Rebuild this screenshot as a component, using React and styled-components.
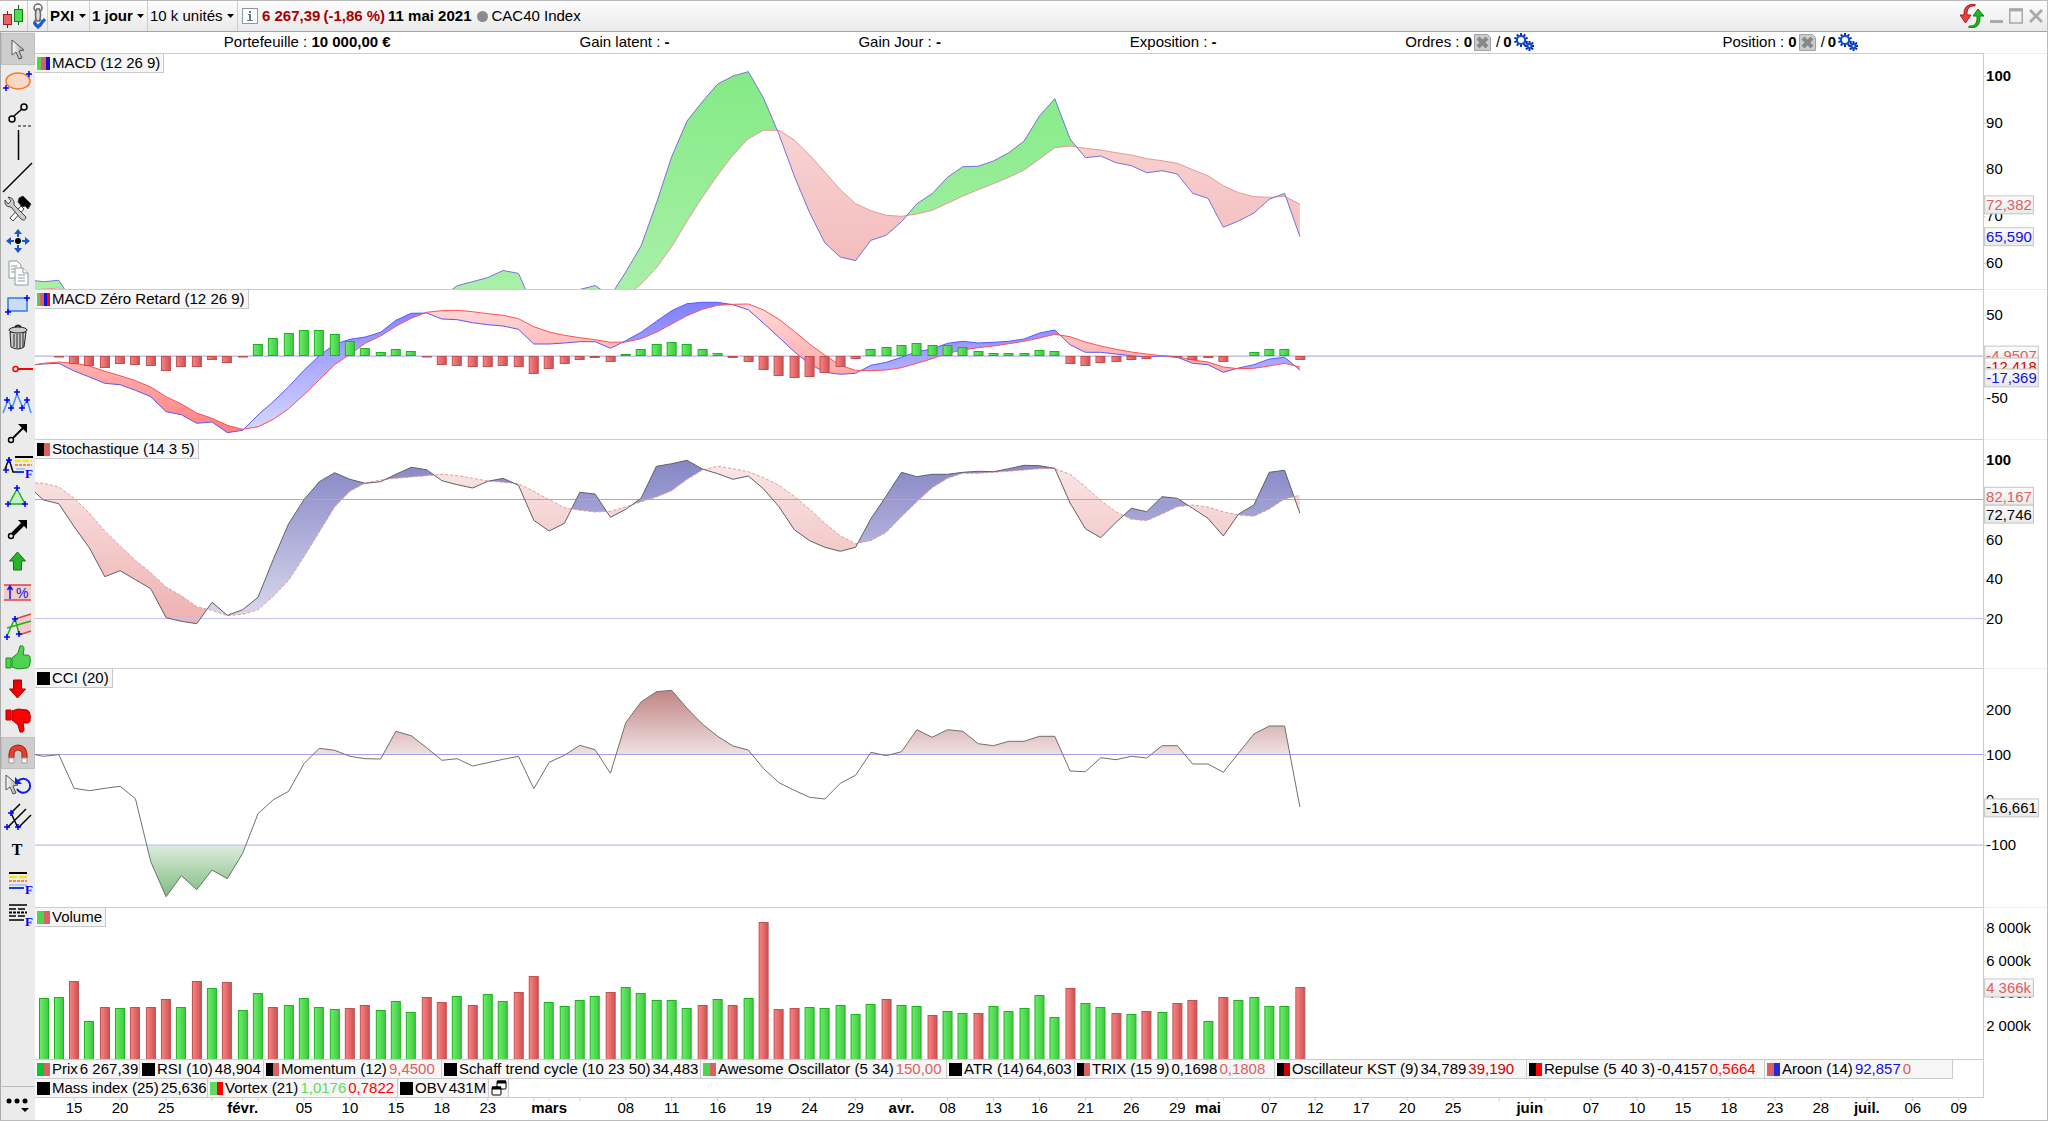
import React from "react"
import styled, { createGlobalStyle } from "styled-components"

// horizontal layout of the plots, in viewBox units
const PLOT_WIDTH = 1949
const STEP = 15.33
const xAt = i => 8.5 + STEP * i

const MACD = [
  280.7, 281.7, 280.3, 304, 312, 312, 312, 312, 312, 312, 312, 312, 312, 312,
  312, 312, 312, 312, 312, 312, 312, 312, 312, 312, 312, 312, 310, 297, 285.7,
  281.7, 277.5, 270.5, 273.4, 308, 312, 304, 289.5, 285.5, 296, 272, 246, 203.3,
  156.7, 121, 101.7, 84, 76, 71.7, 98.3, 134.3, 176, 212.7, 243, 257, 260.7,
  240.3, 235.3, 221.7, 203.7, 193.7, 177.3, 166.7, 166.3, 161, 152.7, 141, 116,
  98.7, 139, 157.7, 156, 162.7, 165.7, 172.7, 170.7, 174, 193.3, 198.3, 227.3,
  221, 213, 199.3, 193.3, 236.7,
]

const MACD_SIGNAL = [
  290, 289, 288, 296, 306, 306, 306, 306, 306, 306, 306, 306, 306, 306, 306,
  306, 306, 306, 306, 306, 306, 306, 306, 306, 306, 306, 306, 304, 304, 302,
  300, 298, 298, 298, 298, 298, 298, 298, 298, 296, 284, 267.7, 246.7, 221,
  197.3, 175, 155, 138.7, 130.3, 130.3, 140, 155, 172.3, 189.7, 203.7, 210.7,
  215.3, 216.3, 214, 210.3, 203.3, 196, 189.7, 183.7, 177.3, 170, 159, 147.7,
  146, 148.3, 150, 152.7, 155, 158.7, 160.7, 163.3, 169.7, 175.7, 185.7, 192.7,
  196.7, 197.3, 196.3, 204.3,
]

const ZERO_LAG = [
  364.7, 364, 363.3, 371, 377, 383.3, 384.7, 390.3, 396.7, 411.7, 414.7, 423.3,
  422, 432.7, 430.3, 415, 401.7, 386.7, 370.3, 355.7, 344.3, 339.3, 337, 332.3,
  320.3, 313.3, 313, 319, 319.7, 322.7, 324.7, 326, 329.3, 344, 344, 343, 341.7,
  341.7, 348.3, 340.7, 332.3, 321.3, 310.7, 303.7, 302.3, 302.3, 304.7, 309.7,
  323.3, 337.3, 351.7, 364, 372.3, 374.3, 373.3, 365.3, 362.3, 357.3, 351.7,
  349, 343.3, 341.3, 343, 342.3, 341.3, 339, 333, 330, 344.7, 352.3, 352.3, 354,
  355.7, 357, 356, 357.3, 363.3, 364.7, 372.3, 368, 364.7, 359, 357.3, 370,
]

const ZERO_LAG_SIGNAL = [
  364.7, 363.3, 362, 363.3, 366, 371.3, 375.7, 380.7, 387, 396.7, 404, 413,
  418.3, 425.3, 429.3, 426.7, 419.3, 408.7, 394.7, 379.7, 364.7, 354.3, 343.3,
  336, 326.3, 318.3, 312.3, 310.7, 310.3, 311.7, 313.7, 315.3, 318.7, 326.7,
  332, 335.3, 337.7, 339.7, 342.3, 342, 338.7, 332.3, 324, 315.7, 309.3, 305.3,
  304.3, 304, 310, 319.3, 331.3, 344, 355.3, 365.3, 370.3, 370.7, 370, 367.7,
  363.3, 358.7, 353.3, 350, 347.7, 346, 343.7, 341.3, 338, 334.3, 336.7, 342,
  346, 349.3, 352, 354, 355.7, 356.7, 360, 362, 367, 368.7, 368.3, 366, 363.3,
  367,
]

const HISTOGRAM = [
  0, -1, -8, -10, -12, -8, -9, -10, -15, -11, -11, -4, -7, -1, 12, 18, 23, 26,
  26, 22, 15, 8, 4, 7, 5, -1, -9, -10, -11, -11, -10, -11, -18, -13, -8, -4, -2,
  -6, 2, 7, 12, 14, 12, 7, 3, -2, -6, -14, -20, -22, -21, -17, -11, -3, 7, 9,
  11, 13, 11, 11, 9, 5, 3, 3, 3, 6, 5, -8, -10, -7, -6, -4, -3, 0, -1, -4, -2,
  -6, 0, 4, 7, 7, -4,
]

const STOCH = [
  492.3, 500, 503.7, 526.7, 548, 576.7, 570.7, 579.7, 588.7, 617.7, 621.3,
  623.7, 602.3, 615.3, 609.7, 597.3, 559.3, 523.7, 499.7, 481.7, 472.7, 479.3,
  483.3, 481.7, 474.3, 467.3, 469.7, 480.7, 484.7, 488, 481.3, 478.3, 485.3,
  520.3, 531, 523.3, 492.3, 494, 517.3, 509.3, 498.3, 466.3, 463.7, 460.3, 469,
  473.7, 479.3, 476, 489, 506.7, 529.7, 540.7, 547.3, 551.3, 547.3, 518.7, 496,
  472.3, 476.7, 474.3, 474.3, 472.3, 471.3, 471.7, 468.7, 465.3, 465.7, 468.3,
  503, 528.7, 537.7, 522.3, 508.3, 511.7, 496.7, 498.3, 508.3, 518.3, 536, 514,
  505, 472.3, 470.3, 513.3,
]

const STOCH_SIGNAL = [
  483, 483.3, 487, 498.3, 513.3, 531, 546, 560.3, 572.7, 587, 595.7, 606.7,
  610.3, 615.7, 614.3, 609.7, 596.3, 580.3, 556.7, 532, 507, 491.3, 483, 480,
  478.3, 477, 475.7, 474.3, 475.7, 478.3, 481, 482.3, 483.7, 491.3, 499.7,
  507.7, 510.3, 512, 511.3, 507, 501.7, 497, 490.7, 479.3, 470, 466.3, 468.7,
  471.7, 477.7, 485.3, 496.3, 509.3, 523.3, 535.7, 543.7, 540.7, 532.3, 516.7,
  501.7, 487.7, 478.3, 473.3, 473.3, 472.3, 471.3, 470, 468.7, 468.7, 474.3,
  486.7, 500.7, 511.7, 519.3, 520.7, 514, 506.7, 505, 507, 511.7, 515, 516.3,
  509, 499, 495.3,
]

const CCI = [
  754.7, 756.3, 754.6, 788.3, 790.7, 788.3, 786.3, 798.7, 861.7, 896.7, 875.7,
  889.7, 870, 878.7, 853.3, 813.7, 799.7, 791.3, 763.7, 748.3, 750.3, 756.3,
  758.7, 759, 731.3, 735.7, 747.7, 760.3, 758.7, 766, 762.7, 759.3, 756.3,
  788.7, 762.3, 755.3, 745.3, 749.7, 773.3, 722.7, 702, 691.7, 690.3, 708.3,
  724, 736.3, 746, 750, 768.7, 782.7, 790.3, 797.3, 799, 783.3, 775.3, 752.3,
  755.7, 751.7, 729.7, 737.3, 729.7, 731.3, 743.7, 745.7, 741.3, 741.3, 736.3,
  736.3, 771, 771.7, 757.7, 759.7, 756.3, 758, 745.7, 745.7, 764, 764, 772.3,
  753, 734, 726, 726, 807,
]

const VOLUME = [
  61, 62, 78, 38, 52, 51, 52, 52, 60, 52, 78, 71, 77, 49, 66, 52, 54, 61, 52,
  50, 51, 54, 49, 58, 47, 62, 57, 63, 54, 65, 58, 67, 83, 57, 53, 59, 63, 67,
  72, 66, 59, 59, 51, 54, 60, 54, 61, 137, 50, 51, 52, 51, 54, 45, 55, 60, 54,
  53, 44, 48, 46, 46, 53, 48, 51, 64, 42, 71, 56, 52, 46, 45, 48, 47, 56, 59,
  38, 62, 59, 62, 53, 53, 72,
]

// g: close above the previous one, r: below
const VOLUME_SIDES =
  "ggrgrgrrrg" +
  "rgrggrgggg" +
  "rrgggrrgrg" +
  "grrggggrgg" +
  "gggrgrgrrr" +
  "gggggrggrg" +
  "grgggggrgg" +
  "rgrgrrgrgg" +
  "ggr"

const DATES = [
  [2, "15"], [5, "20"], [8, "25"], [13, "févr.", true], [17, "05"], [20, "10"],
  [23, "15"], [26, "18"], [29, "23"], [33, "mars", true], [38, "08"],
  [41, "11"], [44, "16"], [47, "19"], [50, "24"], [53, "29"],
  [56, "avr.", true], [59, "08"], [62, "13"], [65, "16"], [68, "21"],
  [71, "26"], [74, "29"], [76, "mai", true], [80, "07"], [83, "12"],
  [86, "17"], [89, "20"], [92, "25"], [97, "juin", true], [101, "07"],
  [104, "10"], [107, "15"], [110, "18"], [113, "23"], [116, "28"],
  [119, "juil.", true], [122, "06"], [125, "09"],
]
const MINOR_TICKS = [11, 14, 32, 35, 77, 95, 98]

const GREEN = "#4fd24f"
const RED = "#dd6060"
const BLUE = "#1010e0"

const INDICATORS = [
  { name: "Prix", colors: ["#00c830", RED], values: [["6 267,39", "#000"]], w: 105 },
  { name: "RSI (10)", colors: ["#000"], values: [["48,904", "#000"]], w: 124 },
  { name: "Momentum (12)", colors: ["#000", RED], values: [["9,4500", RED]], w: 178 },
  { name: "Schaff trend cycle (10 23 50)", colors: ["#000"], values: [["34,483", "#000"]], w: 259 },
  { name: "Awesome Oscillator (5 34)", colors: [GREEN, RED], values: [["150,00", RED]], w: 246 },
  { name: "ATR (14)", colors: ["#000"], values: [["64,603", "#000"]], w: 128 },
  { name: "TRIX (15 9)", colors: ["#000", RED], values: [["0,1698", "#000"], ["0,1808", RED]], w: 200 },
  { name: "Oscillateur KST (9)", colors: ["#000", "#c80000"], values: [["34,789", "#000"], ["39,190", "#c80000"]], w: 252 },
  { name: "Repulse (5 40 3)", colors: ["#000", "#f00"], values: [["-0,4157", "#000"], ["0,5664", "#f00"]], w: 238 },
  { name: "Aroon (14)", colors: [RED, "#2828dc"], values: [["92,857", BLUE], ["0", RED]], w: 188 },
]

const MORE_INDICATORS = [
  { name: "Mass index (25)", colors: ["#000"], values: [["25,636", "#000"]], w: 173 },
  { name: "Vortex (21)", colors: ["#5fdc5f", "#f00"], values: [["1,0176", "#5fdc5f"], ["0,7822", "#f00"]], w: 190 },
  { name: "OBV", colors: ["#000"], values: [["431M", "#000"]], w: 91 },
]

const xs = MACD.map((_, i) => (i === 0 ? 0 : xAt(i - 1)))

const linePath = ys => "M" + ys.map((y, i) => `${xs[i]},${y}`).join("L")

// closed areas between two series, split wherever they cross
const bands = (a, b) => {
  const out = { above: "", below: "" }
  let top = []
  let bottom = []
  let side = null
  const flush = () => {
    if (side) out[side] += "M" + [...top, ...bottom.reverse()].join("L") + "Z"
  }
  a.forEach((ya, i) => {
    const yb = b[i]
    const next = ya <= yb ? "above" : "below"
    if (side && next !== side) {
      const d0 = a[i - 1] - b[i - 1]
      const t = d0 / (d0 - (ya - yb))
      const cross = `${xs[i - 1] + t * (xs[i] - xs[i - 1])},${a[i - 1] + t * (ya - a[i - 1])}`
      top.push(cross)
      flush()
      top = [cross]
      bottom = []
    }
    side = next
    top.push(`${xs[i]},${ya}`)
    bottom.push(`${xs[i]},${yb}`)
  })
  flush()
  return out
}

const Fade = ({ id, from, to, y1, y2 }) => (
  <linearGradient id={id} gradientUnits="userSpaceOnUse" x1="0" x2="0" y1={y1} y2={y2}>
    <stop offset="0" stopColor={from} />
    <stop offset="1" stopColor={to} />
  </linearGradient>
)

const BarFills = () => (
  <defs>
    <linearGradient id="barGreen">
      <stop offset="0" stopColor="#6aee6a" />
      <stop offset="1" stopColor="#40c840" />
    </linearGradient>
    <linearGradient id="barRed">
      <stop offset="0" stopColor="#fa8484" />
      <stop offset="1" stopColor="#cc5252" />
    </linearGradient>
  </defs>
)

const Bar = ({ i, y, height, green }) => (
  <rect
    x={Math.round(xAt(i)) - 4.5}
    y={Math.round(y) + 0.5}
    width="9"
    height={Math.max(height - 1, 0.5)}
    fill={green ? "url(#barGreen)" : "url(#barRed)"}
    stroke={green ? "#1cb41c" : "#c45050"}
  />
)

const Level = ({ y, color = "#a3a3e6" }) => (
  <rect x="0" y={y} width={PLOT_WIDTH} height="1" fill={color} />
)

const MacdPlot = () => {
  const area = bands(MACD, MACD_SIGNAL)
  return (
    <>
      <defs>
        <Fade id="macdUp" from="#84ea84" to="#a8f0a8" y1={70} y2={289} />
        <Fade id="macdDown" from="#f8d6d6" to="#f3b8b8" y1={110} y2={289} />
      </defs>
      <path d={area.above} fill="url(#macdUp)" />
      <path d={area.below} fill="url(#macdDown)" />
      <Line d={linePath(MACD_SIGNAL)} stroke="#e89898" />
      <Line d={linePath(MACD)} stroke="#7474d8" />
    </>
  )
}

const ZeroLagPlot = () => {
  const area = bands(ZERO_LAG, ZERO_LAG_SIGNAL)
  return (
    <>
      <defs>
        <Fade id="zeroUp" from="#8080ff" to="#d8d8ff" y1={302} y2={432} />
        <Fade id="zeroDown" from="#ffdcdc" to="#ff8080" y1={302} y2={432} />
      </defs>
      <BarFills />
      <Level y={355} color="#d8d8f6" />
      <Level y={356} color="#c8c8f0" />
      <path d={area.above} fill="url(#zeroUp)" />
      <path d={area.below} fill="url(#zeroDown)" />
      <Line d={linePath(ZERO_LAG)} stroke="#5858ff" />
      <Line d={linePath(ZERO_LAG_SIGNAL)} stroke="#ff5050" />
      {HISTOGRAM.map((v, i) =>
        v === 0 ? null : (
          <Bar key={i} i={i} y={v > 0 ? 356 - v : 356} height={Math.abs(v)} green={v > 0} />
        )
      )}
    </>
  )
}

const StochPlot = () => {
  const area = bands(STOCH, STOCH_SIGNAL)
  return (
    <>
      <defs>
        <Fade id="stochUp" from="#8686c6" to="#dcdcf0" y1={460} y2={624} />
        <Fade id="stochDown" from="#fae6e6" to="#eeb0b0" y1={465} y2={624} />
      </defs>
      <path d={area.above} fill="url(#stochUp)" />
      <path d={area.below} fill="url(#stochDown)" />
      <Level y={499} />
      <Level y={618} color="#c4c4ee" />
      <Line d={linePath(STOCH_SIGNAL)} stroke="#e49a9a" strokeDasharray="3 2" />
      <Line d={linePath(STOCH)} stroke="#606068" />
    </>
  )
}

const CciPlot = () => {
  const high = bands(CCI, CCI.map(() => 754.5))
  const low = bands(CCI, CCI.map(() => 845))
  return (
    <>
      <defs>
        <Fade id="cciHigh" from="#c08484" to="#f0e0e0" y1={690} y2={754} />
        <Fade id="cciLow" from="#dcecdc" to="#80bc80" y1={845} y2={897} />
      </defs>
      <path d={high.above} fill="url(#cciHigh)" />
      <path d={low.below} fill="url(#cciLow)" />
      <Level y={754} />
      <Level y={844} color="#dcdcf6" />
      <Level y={845} color="#d0d0f2" />
      <Line d={linePath(CCI)} stroke="#707070" />
    </>
  )
}

const VolumePlot = () => (
  <>
    <BarFills />
    {VOLUME.map((v, i) => (
      <Bar key={i} i={i} y={1059 - v} height={v + 2} green={VOLUME_SIDES[i] === "g"} />
    ))}
  </>
)

const PANELS = [
  {
    name: "MACD (12 26 9)",
    colors: [GREEN, RED, BLUE],
    top: 53,
    height: 236,
    Plot: MacdPlot,
    labels: [[75, "100", true], [122, "90"], [169, "80"], [216, "70"], [263, "60"]],
    tags: [[205, "72,382", RED], [237, "65,590", BLUE]],
  },
  {
    name: "MACD Zéro Retard (12 26 9)",
    colors: [GREEN, RED, BLUE, "#f00"],
    top: 289,
    height: 150,
    Plot: ZeroLagPlot,
    labels: [[314, "50"], [398, "-50"]],
    tags: [[355, "-4,9507", RED], [367, "-12,418", "#e00000"], [378, "-17,369", BLUE]],
  },
  {
    name: "Stochastique (14 3 5)",
    colors: ["#000", RED],
    top: 439,
    height: 229,
    Plot: StochPlot,
    labels: [[459, "100", true], [539, "60"], [579, "40"], [619, "20"]],
    tags: [[496, "82,167", RED], [514, "72,746", "#000"]],
  },
  {
    name: "CCI (20)",
    colors: ["#000"],
    top: 668,
    height: 239,
    Plot: CciPlot,
    labels: [[709, "200"], [754, "100"], [800, "0"], [845, "-100"]],
    tags: [[808, "-16,661", "#000"]],
  },
  {
    name: "Volume",
    colors: [GREEN, RED],
    top: 907,
    height: 152,
    Plot: VolumePlot,
    labels: [[927, "8 000k"], [960, "6 000k"], [993, "4 000k"], [1026, "2 000k"]],
    tags: [[988, "4 366k", RED]],
  },
]

const Cross = ({ x, y }) => (
  <path d={`M${x - 3} ${y}h6M${x} ${y - 3}v6`} stroke="#00f" strokeWidth="1.5" />
)

const Letter = () => (
  <text x="23" y="29" fontFamily="Liberation Serif, serif" fontSize="13" fontWeight="700" fill="#00f">
    F
  </text>
)

const Pointer = () => (
  <path d="M4 3v15l4-3 3 7 3-1-3-7 5-1z" fill="url(#pointerFill)" stroke="#555" />
)

const Arrow = ({ thick }) => (
  <>
    <circle cx="9" cy="23" r="2.5" stroke="#000" strokeWidth="1.5" fill="none" />
    <path d="M11 21L22 10" stroke="#000" strokeWidth={thick ? 4 : 2} />
    <path d="M16 7h9v9z" fill="#000" />
  </>
)

const ThumbShape = () => (
  <>
    <path d="M4 17h5v10H4z" />
    <path d="M10 17l6-5 2-7q4-1 4 3l-1 6h5q3 1 2 4 1 2 0 4 0 4-3 5l-9 1-6-2z" />
  </>
)

const TOOLS = [
  ["Sélection", (
    <>
      <defs>
        <linearGradient id="pointerFill">
          <stop offset="0" stopColor="#fff" />
          <stop offset="1" stopColor="#999" />
        </linearGradient>
      </defs>
      <g transform="translate(6 4)"><Pointer /></g>
    </>
  )],
  ["Ellipse", (
    <>
      <ellipse cx="16" cy="16" rx="12" ry="8" fill="#fad8c8" stroke="#f97a22" strokeWidth="1.5" />
      <Cross x={27} y={9} />
      <Cross x={4} y={23} />
    </>
  )],
  ["Segment", (
    <g stroke="#000" fill="none" strokeWidth="1.5">
      <circle cx="22" cy="10" r="3" />
      <circle cx="10" cy="22" r="3" />
      <path d="M12 19l8-7" />
      <path d="M16 29h15" strokeDasharray="3 2" stroke="#555" />
    </g>
  )],
  ["Ligne verticale", <path d="M16.5 1v30" stroke="#000" strokeWidth="1.5" />],
  ["Droite", <path d="M1 31L30 2" stroke="#000" strokeWidth="1.5" />],
  ["Outils", (
    <g stroke="#444">
      <path d="M19 13l-11 12 3 3 11-12z" fill="#fff" />
      <path d="M17 5l4-2 8 8-3 5-3-3-3 1-4-5z" fill="#000" />
      <path d="M3 7q-1 7 6 7l10 12q4 3 5-2L12 12q1-7-6-8l3 4-3 3z" fill="#ccc" />
    </g>
  )],
  ["Déplacer", (
    <>
      <circle cx="16" cy="16" r="3" fill="#000" />
      <path
        d="M16 4l4 5h-3v3h-2V9h-3zM16 28l4-5h-3v-3h-2v3h-3zM4 16l5-4v3h3v2H9v3zM28 16l-5-4v3h-3v2h3v3z"
        fill="#1459d0"
      />
    </>
  )],
  ["Dupliquer", (
    <g stroke="#8c9aa2" fill="#fff">
      <path d="M7 4h8l4 4v13H7z" />
      <path d="M9 9h6M9 12h6M9 15h6" />
      <path d="M13 11h8l5 5v12H13z" />
      <path d="M21 11v5h5M16 18h7M16 21h7M16 24h7" />
    </g>
  )],
  ["Rectangle", (
    <>
      <rect x="6" y="9" width="19" height="13" fill="#ccdcf8" stroke="#2a7cec" strokeWidth="1.5" />
      <Cross x={25} y={9} />
      <Cross x={6} y={23} />
    </>
  )],
  ["Supprimer", (
    <g stroke="#222" fill="#ccc">
      <path d="M8 11l1 15q7 4 13 0l2-15z" />
      <path d="M12 13v13M15 13v14M18 13v14M21 12v14" />
      <ellipse cx="16" cy="9" rx="9" ry="3" />
      <path d="M13 6q3-3 6 0" fill="none" strokeWidth="2" />
    </g>
  )],
  ["Demi-droite", (
    <>
      <path d="M16 16h15" stroke="red" strokeWidth="2" />
      <circle cx="13.5" cy="16" r="2.5" stroke="red" strokeWidth="1.5" fill="none" />
    </>
  )],
  ["Vagues", (
    <>
      <path d="M1 28l5-13 4 8 5-14 6 14 4-8 4 13" fill="none" stroke="#4090ff" strokeWidth="1.5" />
      <Cross x={15} y={7} />
      <Cross x={5} y={15} />
      <Cross x={25} y={15} />
      <Cross x={9} y={23} />
      <Cross x={20} y={23} />
    </>
  )],
  ["Flèche", <Arrow />],
  ["Retracements", (
    <>
      <path d="M13 8h18" stroke="#000" strokeWidth="2" />
      <path d="M13 12h17" stroke="#ffe600" strokeWidth="2" strokeDasharray="6 2" />
      <path d="M13 16h17" stroke="#f78c30" strokeWidth="2" strokeDasharray="3 1" />
      <path d="M3 20l4-10 4 13h2" stroke="#000" fill="none" strokeWidth="1.5" />
      <path d="M14 20h9" stroke="#b8c8f4" strokeWidth="2" />
      <path d="M13 23h9" stroke="#1040e0" strokeWidth="2" />
      <Cross x={7} y={11} />
      <Cross x={4} y={21} />
      <Letter />
    </>
  )],
  ["Triangle", (
    <>
      <path d="M15 8l8 15H7z" fill="#c8ecc8" stroke="#18b418" strokeWidth="1.5" />
      <Cross x={15} y={7} />
      <Cross x={6} y={23} />
      <Cross x={23} y={23} />
    </>
  )],
  ["Flèche épaisse", <Arrow thick />],
  ["Flèche haut", <path d="M15.5 7l8 9h-4v9h-8v-9h-4z" fill="#28b428" stroke="#177017" />],
  ["Variation", (
    <>
      <path d="M2 8h27v15H2z" fill="#f0cccc" />
      <path d="M2 8h27M2 23h27" stroke="#d44" strokeWidth="1.5" />
      <path d="M8 22V10M5.5 13L8 9l2.5 4" stroke="#1414e0" strokeWidth="1.5" fill="none" />
      <text x="14" y="21" fontFamily="Liberation Sans, sans-serif" fontSize="14" fill="#1414e0">%</text>
    </>
  )],
  ["Canal", (
    <>
      <path d="M13 10l16-5v17l-12 4z" fill="#f0cccc" />
      <path d="M13 10l16-5M17 26l12-4" stroke="#d44" strokeWidth="1.5" />
      <path d="M5 27l8-18 4 16M5 19l24-7" fill="none" stroke="#18b418" strokeWidth="1.5" />
      <Cross x={13} y={10} />
      <Cross x={5} y={28} />
      <Cross x={17} y={25} />
    </>
  )],
  ["Pouce haut", <g fill="#4fd24f" stroke="#1f8c1f"><ThumbShape /></g>],
  ["Flèche bas", <path d="M15.5 25l8-9h-4V7h-8v9h-4z" fill="#f00000" stroke="#a00000" />],
  ["Pouce bas", (
    <g fill="#f00" stroke="#b00000" transform="matrix(1 0 0 -1 0 32)"><ThumbShape /></g>
  )],
  ["Aimant", (
    <>
      <path d="M9.5 21v-4a6.5 6.5 0 0 1 13 0v4" fill="none" stroke="#a02010" strokeWidth="6" />
      <path d="M9.5 21v-4a6.5 6.5 0 0 1 13 0v4" fill="none" stroke="#e4402c" strokeWidth="4" />
      <path d="M7 21h5v5H7zM20 21h5v5h-5z" fill="#fff" stroke="#999" />
    </>
  ), true],
  ["Annuler", (
    <>
      <g transform="translate(0 3)"><Pointer /></g>
      <path d="M16 12a7 7 0 1 1-1 8" fill="none" stroke="#0a1ee6" strokeWidth="2" />
      <path d="M13 8v7h7z" fill="#0a1ee6" />
    </>
  )],
  ["Fourchette", (
    <>
      <path d="M9 12L18 3M5 27L24 8M16 27l13-13M9 12l7 15" stroke="#000" strokeWidth="1.5" />
      <Cross x={9} y={12} />
      <Cross x={5} y={26} />
      <Cross x={16} y={26} />
    </>
  )],
  ["Texte", (
    <text x="15" y="22" textAnchor="middle" fontFamily="Liberation Serif, serif" fontSize="16" fontWeight="700">
      T
    </text>
  )],
  ["Fibonacci", (
    <>
      <path d="M7 8h18" stroke="#000" strokeWidth="2" />
      <path d="M7 12h18" stroke="#ffe100" strokeWidth="2" strokeDasharray="8 2" />
      <path d="M7 16h18" stroke="#f78c30" strokeWidth="2" strokeDasharray="3 1" />
      <path d="M7 20h18" stroke="#b8c8f4" strokeWidth="2" />
      <path d="M7 23h15" stroke="#1040e0" strokeWidth="2" />
      <Letter />
    </>
  )],
  ["Projection", (
    <>
      <path d="M7 8h18M7 23h15" stroke="#000" strokeWidth="1.5" />
      <path d="M7 12h18M7 19h18" stroke="#000" strokeWidth="1.5" strokeDasharray="7 2" />
      <path d="M7 15.5h18" stroke="#000" strokeWidth="2" strokeDasharray="3 1" />
      <Letter />
    </>
  )],
]

const Caret = () => (
  <svg width="7" height="4" viewBox="0 0 7 4" aria-hidden="true">
    <path d="M0 0h7L3.5 4z" />
  </svg>
)

const Picker = ({ label, bold, value }) => (
  <PickerBox>
    <Select aria-label={label} $bold={bold} defaultValue={value}>
      <option>{value}</option>
    </Select>
    <Caret />
  </PickerBox>
)

const Gear = ({ x, y, r, teeth }) => (
  <g transform={`translate(${x} ${y})`}>
    {Array.from({ length: teeth }, (_, i) => (
      <rect key={i} x="-1" y={-r - 2} width="2" height="3" fill="#0a2cb0" transform={`rotate(${(360 / teeth) * i})`} />
    ))}
    <circle r={r - 1} fill="none" stroke="#0f50c8" strokeWidth="2" />
  </g>
)

const OrderCount = ({ label }) => (
  <Info>
    {label} : <b>0</b>
    <CountButton aria-label={`${label} : tout annuler`}>
      <svg width="17" height="17" viewBox="0 0 17 17">
        <path d="M.5.5h13l3 3v13H.5z" fill="#ccc" stroke="#a0a0a0" />
        <path d="M4 4l9 9M13 4l-9 9" stroke="#888" strokeWidth="4" />
      </svg>
    </CountButton>
    <Slash>/</Slash>
    <b>0</b>
    <CountButton aria-label={`${label} : réglages`}>
      <svg width="20" height="18" viewBox="0 0 20 18">
        <Gear x={7} y={7} r={5} teeth={10} />
        <Gear x={15.5} y={13} r={3} teeth={8} />
      </svg>
    </CountButton>
  </Info>
)

const Legend = ({ name, colors, values = [] }) => (
  <>
    <Swatch>
      {colors.map(c => (
        <Stripe key={c} $color={c} />
      ))}
    </Swatch>
    <span>{name}</span>
    {values.map(([text, color]) => (
      <Value key={text} $color={color}>
        {text}
      </Value>
    ))}
  </>
)

const Scale = ({ top, height, labels, tags }) => (
  <ScaleSvg viewBox={`0 ${top} 64 ${height}`} $height={height}>
    <defs>
      <linearGradient id="tagFill" x2="0" y2="1">
        <stop offset="0" stopColor="#fdfdfd" />
        <stop offset="1" stopColor="#e8e8e8" />
      </linearGradient>
    </defs>
    {labels.map(([y, text, bold]) => (
      <g key={text}>
        <path d={`M0 ${y + 0.5}h3`} stroke="#ccc" />
        <text x="3" y={y + 5} fontWeight={bold ? 700 : 400}>
          {text}
        </text>
      </g>
    ))}
    {tags.map(([y, text, color]) => (
      <g key={text}>
        <rect
          x="1.5"
          y={y - 9.5}
          width={text[0] === "-" ? 54 : 49}
          height="18"
          fill="url(#tagFill)"
          stroke="#c4c4c4"
        />
        <text x="3" y={y + 5} fill={color}>
          {text}
        </text>
      </g>
    ))}
  </ScaleSvg>
)

const Panel = ({ name, colors, top, height, labels, tags, Plot }) => (
  <PanelRow>
    <PlotArea>
      <PlotSvg
        viewBox={`0 ${top} ${PLOT_WIDTH} ${height}`}
        preserveAspectRatio="none"
        $height={height}
      >
        <Plot />
      </PlotSvg>
      <PanelLabel>
        <Legend name={name} colors={colors} />
      </PanelLabel>
    </PlotArea>
    <Scale top={top} height={height} labels={labels} tags={tags} />
  </PanelRow>
)

const percent = i => `${(xAt(i) / PLOT_WIDTH) * 100}%`

const App = () => {
  return (
    <>
      <GlobalStyle />
      <Window>
        <Header>
          <Segment>
            <svg width="24" height="24" viewBox="0 0 24 24">
              <path d="M5.5 7v17" stroke="#802020" />
              <rect x="1.5" y="10.5" width="8" height="10" fill="#e46464" stroke="#a02020" />
              <path d="M16.5 1v20" stroke="#086008" />
              <rect x="12.5" y="5.5" width="8" height="12" fill="#50dc50" stroke="#108010" />
            </svg>
          </Segment>
          <Segment>
            <svg width="16" height="26" viewBox="0 0 16 26">
              <g fill="none" stroke="#666" strokeWidth="1.5">
                <circle cx="8" cy="5" r="4" />
                <circle cx="8" cy="20" r="4" />
                <path d="M6.5 6q-2 6 0 12h3q2-6 0-12z" fill="#ddd" />
              </g>
              <path d="M4 19l4 5 7-8" fill="none" stroke="#1060e0" strokeWidth="3" />
            </svg>
          </Segment>
          <Picker label="Valeur" bold value="PXI" />
          <Picker label="Unité de temps" bold value="1 jour" />
          <Picker label="Historique" value="10 k unités" />
          <Quote>
            <svg width="16" height="16" viewBox="0 0 16 16">
              <rect x=".5" y=".5" width="15" height="15" fill="#fff" stroke="#8c9aa2" />
              <path d="M7 3h2v2H7zM6 6h3v6h2v1H5v-1h2V7H6z" fill="#6c7a82" />
            </svg>
            <Price>6 267,39</Price>
            <Price>(-1,86 %)</Price>
            <b>11 mai 2021</b>
            <Dot />
            <span>CAC40 Index</span>
          </Quote>
          <WindowButtons>
            <IconButton aria-label="Actualiser">
              <svg width="24" height="24" viewBox="0 0 24 24">
                <path d="M15 2Q8 1 7 8v3h4l-5.5 8L0 11h4Q3 0 15 0z" fill="#ec4040" stroke="#b01818" />
                <path d="M9 22q7 1 8-6v-4h-4l5-7 6 7h-4q1 13-11 12z" fill="#20b820" stroke="#0c800c" />
              </svg>
            </IconButton>
            <IconButton aria-label="Réduire">
              <svg width="13" height="16"><path d="M0 13.5h13" stroke="#aaa" strokeWidth="3" /></svg>
            </IconButton>
            <IconButton aria-label="Agrandir">
              <svg width="14" height="16">
                <rect x=".75" y="1" width="12.5" height="14" fill="none" stroke="#aaa" strokeWidth="1.5" />
                <path d="M0 2h14" stroke="#aaa" strokeWidth="3" />
              </svg>
            </IconButton>
            <IconButton aria-label="Fermer">
              <svg width="14" height="16"><path d="M1 2l12 12M13 2L1 14" stroke="#aaa" strokeWidth="3" /></svg>
            </IconButton>
          </WindowButtons>
        </Header>
        <Body>
          <Sidebar>
            {TOOLS.map(([name, icon, active], i) => (
              <Tool key={name} aria-label={name} $active={i === 0 || active}>
                <svg width="32" height="32" viewBox="0 0 32 32">
                  {icon}
                </svg>
              </Tool>
            ))}
            <MoreTools aria-label="Plus d'outils">
              <svg width="32" height="32" viewBox="0 0 32 32">
                <circle cx="7" cy="14" r="2.5" />
                <circle cx="15" cy="14" r="2.5" />
                <circle cx="23" cy="14" r="2.5" />
                <path d="M19 21h8l-4 4z" />
              </svg>
            </MoreTools>
          </Sidebar>
          <Main>
            <InfoRow>
              <Info>Portefeuille : <b>10 000,00 €</b></Info>
              <Info>Gain latent : <b>-</b></Info>
              <Info>Gain Jour : <b>-</b></Info>
              <Info>Exposition : <b>-</b></Info>
              <OrderCount label="Ordres" />
              <OrderCount label="Position" />
            </InfoRow>
            {PANELS.map(panel => (
              <Panel key={panel.name} {...panel} />
            ))}
            <Footer>
              <IndicatorRow>
                {INDICATORS.map(item => (
                  <Indicator key={item.name} $width={item.w}>
                    <Legend {...item} />
                  </Indicator>
                ))}
              </IndicatorRow>
              <IndicatorRow>
                {MORE_INDICATORS.map(item => (
                  <Indicator key={item.name} $width={item.w}>
                    <Legend {...item} />
                  </Indicator>
                ))}
                <Indicator $width={20}>
                  <IconButton aria-label="Fenêtres">
                    <svg width="16" height="16" viewBox="0 0 16 16">
                      <rect x="6" y="1" width="9" height="8" rx="1" fill="#fff" stroke="#000" />
                      <path d="M6 2h9" stroke="#000" strokeWidth="3" />
                      <rect x="1" y="7" width="9" height="8" rx="1" fill="#fff" stroke="#000" />
                      <path d="M1 8h9" stroke="#000" strokeWidth="3" />
                    </svg>
                  </IconButton>
                </Indicator>
              </IndicatorRow>
            </Footer>
            <DateAxis>
              {[...DATES.map(d => d[0]), ...MINOR_TICKS].map(i => (
                <line key={i} x1={percent(i)} x2={percent(i)} y1="0" y2="3" stroke="#ccc" />
              ))}
              {DATES.map(([i, text, bold]) => (
                <text key={i} x={percent(i)} y="15" textAnchor="middle" fontWeight={bold ? 700 : 400}>
                  {text}
                </text>
              ))}
            </DateAxis>
          </Main>
        </Body>
      </Window>
    </>
  )
}

export default App

const GlobalStyle = createGlobalStyle`
  * {
    box-sizing: border-box;
  }

  body {
    margin: 0;
    background: #fff;
    color: #000;
    font: 15px/18px "Liberation Sans", Arial, sans-serif;
  }

  svg {
    display: block;
    flex: none;
  }
`

const Window = styled.div`
  min-height: 100vh;
  display: flex;
  flex-direction: column;
  border: 1px solid #bbb;
  border-width: 1px 1px 1px 0;
`

const Header = styled.header`
  height: 31px;
  display: flex;
  align-items: stretch;
  background: linear-gradient(#fdfdfd, #e9e9e9);
  border-bottom: 1px solid #a4a4a4;
  white-space: nowrap;
`

const Segment = styled.div`
  display: flex;
  align-items: center;
  padding: 0 1px 0 2px;
  border-right: 1px solid #ccc;
`

const PickerBox = styled(Segment)`
  gap: 4px;
  padding: 0 3px 0 2px;
`

const Select = styled.select`
  appearance: none;
  border: 0;
  padding: 0;
  background: none;
  color: inherit;
  font: inherit;
  font-weight: ${p => (p.$bold ? 700 : 400)};
`

const Quote = styled.div`
  display: flex;
  align-items: center;
  gap: 3px;
  padding-left: 4px;

  svg {
    margin-right: 1px;
  }
`

const Price = styled.b`
  color: #a80000;
`

const Dot = styled.span`
  width: 11px;
  height: 11px;
  margin: 0 1px 0 2px;
  border-radius: 50%;
  background: #8c8c8c;
`

const WindowButtons = styled.div`
  display: flex;
  align-items: center;
  gap: 6px;
  margin-left: auto;
  padding-right: 4px;
`

const IconButton = styled.button`
  display: flex;
  border: 0;
  padding: 0;
  background: none;
  cursor: pointer;
`

const CountButton = styled(IconButton)`
  margin-left: 2px;
`

const Body = styled.div`
  flex: 1;
  display: flex;
`

const Sidebar = styled.nav`
  flex: 0 0 34px;
  display: flex;
  flex-direction: column;
  padding-top: 1px;
  background: #ebebeb;
  border-left: 1px solid #aaa;
`

const Tool = styled.button`
  height: 32px;
  border: 1px solid ${p => (p.$active ? "#c0c0c0" : "transparent")};
  padding: 0;
  background: ${p => (p.$active ? "#cdcdcd" : "none")};
  display: flex;
  align-items: center;
  justify-content: center;
  cursor: pointer;
`

const MoreTools = styled(Tool)`
  height: 34px;
  margin-top: auto;
  border-top-color: #bbb;
`

const Main = styled.main`
  flex: 1;
  min-width: 0;
  display: flex;
  flex-direction: column;
`

const InfoRow = styled.div`
  height: 21px;
  display: flex;
  align-items: center;
  justify-content: space-evenly;
  padding-bottom: 1px;
`

const Info = styled.div`
  display: flex;
  align-items: center;
  white-space: pre;
`

const Slash = styled.span`
  margin: 0 3px 0 5px;
`

const PanelRow = styled.section`
  display: flex;
`

const PlotArea = styled.div`
  position: relative;
  flex: 1;
  min-width: 0;
  border-top: 1px solid #ccc;
  border-right: 1px solid #ccc;
  margin-right: -1px;
`

const PlotSvg = styled.svg`
  width: 100%;
  height: ${p => p.$height}px;
  margin-top: -1px;
`

const Line = styled.path`
  fill: none;
  stroke-width: 1;
  vector-effect: non-scaling-stroke;
`

const PanelLabel = styled.div`
  position: absolute;
  top: 0;
  left: 0;
  height: 19px;
  display: flex;
  align-items: center;
  padding: 0 3px 0 2px;
  background: #f6f6f6;
  border: 1px solid #c8c8c8;
  border-width: 0 1px 1px 0;
  white-space: nowrap;
`

const Swatch = styled.span`
  width: 13px;
  height: 13px;
  display: flex;
  flex: none;
  margin-right: 2px;
`

const Stripe = styled.i`
  flex: 1;
  background: ${p => p.$color};
`

const Value = styled.span`
  margin-left: 2px;
  color: ${p => p.$color};
`

const ScaleSvg = styled.svg`
  width: 64px;
  height: ${p => p.$height}px;
  border-top: 1px solid #eee;
`

const Footer = styled.footer`
  height: 39px;
  margin-right: 63px;
  border: 1px solid #ccc;
  border-width: 1px 1px 1px 0;
`

const IndicatorRow = styled.div`
  display: flex;
  height: 19px;
`

const Indicator = styled.div`
  flex: 0 1 ${p => p.$width}px;
  display: flex;
  align-items: center;
  padding-left: 2px;
  background: #f6f6f6;
  border: 1px solid #ccc;
  border-width: 0 1px 1px 0;
  white-space: nowrap;
`

const DateAxis = styled.svg`
  width: calc(100% - 64px);
  height: 22px;
  overflow: visible;
`
